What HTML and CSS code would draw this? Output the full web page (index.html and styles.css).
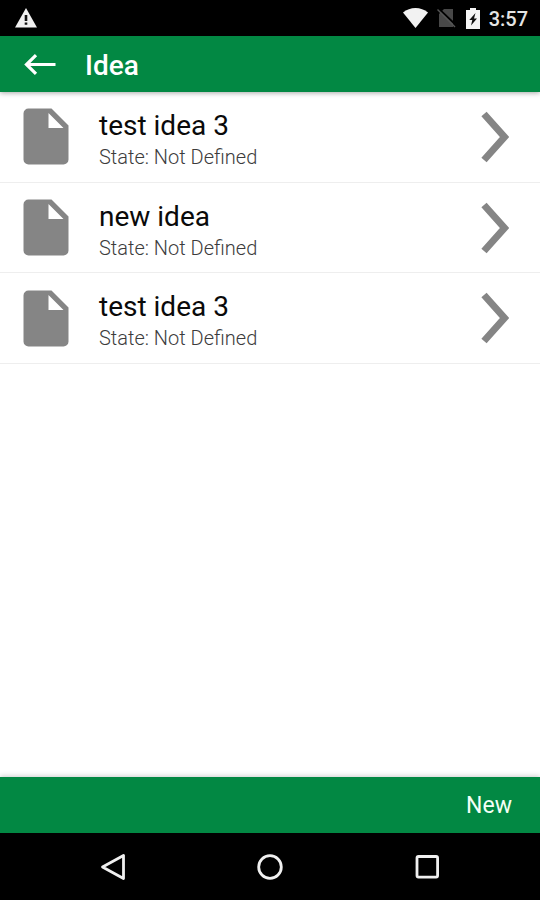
FILE: index.html
```html
<!DOCTYPE html>
<html lang="en">

<head>
  <meta charset="UTF-8">
  <meta name="viewport" content="width=device-width, initial-scale=1.0">
  <title>Idea</title>
  <link rel="stylesheet" href="styles.css">
</head>

<body>
  <!-- shared list icons -->
  <svg class="symbols" width="0" height="0">
    <symbol id="file" viewBox="0 0 46 57">
      <path fill-rule="evenodd" d="M5.500 0.500H28.500L45.500 17.500V51.500a5 5 0 0 1-5 5H5.500a5 5 0 0 1-5-5V5.500a5 5 0 0 1 5-5ZM25.500 5V20H40.500Z" />
    </symbol>
    <symbol id="chevron" viewBox="0 0 28 52">
      <path d="M3 3L23.500 26L3 49" />
    </symbol>
  </svg>

  <div class="status-bar">
    <svg class="warning" width="22" height="20" viewBox="0 0 22 20">
      <path fill="#f0f0f0" d="M11 0L22 19.500H0Z" />
      <path fill="#111" d="M9.700 7h2.600v6H9.700zM9.700 14.500h2.600v2.300H9.700z" />
    </svg>
    <div class="status-icons">
      <svg class="wifi" width="25" height="20" viewBox="0 0 25 20">
        <path fill="#f2f2f2" d="M12.500 20L0 4.500C7 -1.500 18 -1.500 25 4.500Z" />
      </svg>
      <svg class="no-sim" width="19" height="20" viewBox="0 0 19 20">
        <path fill="#484848" d="M7 1H16V19H2V6Z" />
        <path stroke="#000" stroke-width="2" d="M1.500 0.500L19 17" />
        <path stroke="#555" stroke-width="1.500" d="M0.500 1.500L18 19" />
      </svg>
      <svg class="battery" width="14" height="21" viewBox="0 0 14 21">
        <path fill="#f5f5f5" d="M4 0h6v2h4v19H0V2h4Z" />
        <path fill="#111" d="M9.500 5L3.300 12H6.300L5 17.500L11 10.500H8Z" />
      </svg>
      <span class="clock">3:57</span>
    </div>
  </div>

  <header class="header">
    <svg width="32" height="21" viewBox="0 0 32 21" fill="none" stroke="#fff" stroke-width="3.200">
      <path d="M12 1.200L2.500 10.500L12 19.800M2.500 10.500H31.500" />
    </svg>
    <h1>Idea</h1>
  </header>

  <main class="list">
    <div class="item">
      <svg class="file"><use href="#file" /></svg>
      <div class="text">
        <p class="name">test idea 3</p>
        <p class="state">State: Not Defined</p>
      </div>
      <svg class="chevron"><use href="#chevron" /></svg>
    </div>
    <div class="item">
      <svg class="file"><use href="#file" /></svg>
      <div class="text">
        <p class="name">new idea</p>
        <p class="state">State: Not Defined</p>
      </div>
      <svg class="chevron"><use href="#chevron" /></svg>
    </div>
    <div class="item">
      <svg class="file"><use href="#file" /></svg>
      <div class="text">
        <p class="name">test idea 3</p>
        <p class="state">State: Not Defined</p>
      </div>
      <svg class="chevron"><use href="#chevron" /></svg>
    </div>
  </main>

  <footer class="footer">
    <span>New</span>
  </footer>

  <nav class="nav-bar">
    <svg width="26" height="28" viewBox="0 0 26 28">
      <path d="M23.500 2.500V25.500L2.500 14Z" />
    </svg>
    <svg width="26" height="28" viewBox="0 0 26 28">
      <circle cx="13" cy="14" r="11.300" />
    </svg>
    <svg width="26" height="28" viewBox="0 0 26 28">
      <rect x="3" y="3.500" width="20.600" height="20.600" rx="1.500" />
    </svg>
  </nav>
</body>

</html>
```

FILE: styles.css
```css
* {
  box-sizing: border-box;
}

body {
  display: flex;
  flex-direction: column;
  height: 900px;
  margin: 0;
  background-color: white;
  font-family: Roboto, sans-serif;
}

h1,
p {
  margin: 0;
}

svg {
  display: block;
  flex-shrink: 0;
}

.symbols {
  display: none;
}

.status-bar {
  display: flex;
  justify-content: space-between;
  align-items: center;
  height: 36px;
  padding: 0 12px 0 15px;
  background-color: black;
}

.status-icons {
  display: flex;
  align-items: center;
}

.no-sim {
  margin-left: 9px;
}

.battery {
  margin-left: 10px;
}

.clock {
  margin-left: 9px;
  color: #e4e4e4;
  font-size: 20px;
  font-weight: 500;
  line-height: 36px;
  padding-top: 2px;
}

.header {
  display: flex;
  align-items: center;
  height: 56px;
  padding-left: 24px;
  background-color: #028843;
  box-shadow: 0 1px 5px rgba(0, 0, 0, 0.35);
  color: white;
}

.header h1 {
  margin: 2px 0 0 29px;
  font-size: 28px;
  font-weight: 500;
}

.list {
  flex: 1;
}

.item {
  display: flex;
  align-items: center;
  height: 90.700px;
  padding: 0 31px 0 23px;
  border-bottom: 1px solid #eee;
}

.file {
  width: 46px;
  height: 57px;
  fill: #858585;
}

.text {
  flex: 1;
  margin-left: 30px;
  padding-top: 7px;
}

.name {
  color: #0a0a0a;
  font-size: 28px;
  line-height: 34px;
}

.state {
  color: #3c3c3c;
  font-size: 20px;
  font-weight: 300;
  line-height: 29px;
}

.chevron {
  width: 28px;
  height: 52px;
  fill: none;
  stroke: #858585;
  stroke-width: 7;
}

.footer {
  display: flex;
  justify-content: flex-end;
  align-items: center;
  height: 56px;
  padding: 1px 28px 0 0;
  background-color: #028843;
  box-shadow: 0 -1px 5px rgba(0, 0, 0, 0.2);
  color: #f4fff6;
  font-size: 23px;
}

.nav-bar {
  display: flex;
  justify-content: center;
  align-items: center;
  gap: 131px;
  height: 67px;
  background-color: black;
}

.nav-bar svg {
  fill: none;
  stroke: #f0f0f0;
  stroke-width: 2.800;
  stroke-linejoin: round;
}
```
